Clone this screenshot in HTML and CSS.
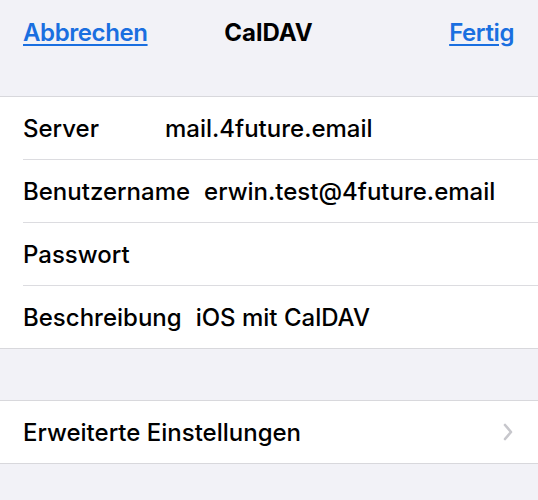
FILE: index.html
```html
<!DOCTYPE html>
<html lang="de">
<head>
    <meta charset="UTF-8">
    <title>CalDAV</title>
    <link rel="stylesheet" href="styles.css">
</head>
<body>
    <header class="nav-bar">
        <a class="nav-link" href="#">Abbrechen</a>
        <div class="nav-title">CalDAV</div>
        <a class="nav-link nav-right" href="#">Fertig</a>
    </header>

    <!-- Kontodaten -->
    <section class="group">
        <div class="row">
            <span class="label">Server</span>
            <span class="value">mail.4future.email</span>
        </div>
        <div class="row">
            <span class="label">Benutzername</span>
            <span class="value">erwin.test@4future.email</span>
        </div>
        <div class="row">
            <span class="label">Passwort</span>
            <span class="value"></span>
        </div>
        <div class="row">
            <span class="label">Beschreibung</span>
            <span class="value">iOS mit CalDAV</span>
        </div>
    </section>

    <!-- Erweitert -->
    <section class="group">
        <div class="row row-link">
            <span class="label">Erweiterte Einstellungen</span>
            <svg class="chevron" width="12" height="20" viewBox="0 0 12 20">
                <path d="M3 3 L9 10 L3 17" fill="none" stroke="#c7c7cc" stroke-width="2.6" stroke-linecap="round" stroke-linejoin="round"/>
            </svg>
        </div>
    </section>
</body>
</html>
```

FILE: styles.css
```css
body {
    margin: 0;
    font-family: Inter, 'Liberation Sans', sans-serif;
    background: #f2f2f7;
    color: #000;
    height: 500px;
    overflow: hidden;
}

.nav-bar {
    display: grid;
    grid-template-columns: 1fr auto 1fr;
    align-items: center;
    padding: 14px 24px 0 23px;
    height: 36px;
    margin-bottom: 46px;
}

.nav-link {
    color: #1a6fe0;
    font-size: 24px;
    font-weight: 600;
    letter-spacing: -0.4px;
    text-decoration: underline;
    text-decoration-thickness: 2px;
    text-underline-offset: 3px;
}

.nav-right {
    justify-self: end;
}

.nav-title {
    font-size: 24px;
    font-weight: 700;
}

.group {
    background: #fff;
    border-top: 1px solid #d8d8dc;
    border-bottom: 1px solid #d8d8dc;
    margin-bottom: 51px;
}

.row {
    display: flex;
    align-items: center;
    height: 62px;
    margin-left: 23px;
    padding-right: 24px;
    border-bottom: 1px solid #dcdce0;
    font-size: 24px;
    font-weight: 500;
}

.row:last-child {
    border-bottom: none;
}

.label {
    min-width: 128px;
    margin-right: 14px;
}

.row-link {
    justify-content: space-between;
}

.chevron {
    display: block;
}
```
